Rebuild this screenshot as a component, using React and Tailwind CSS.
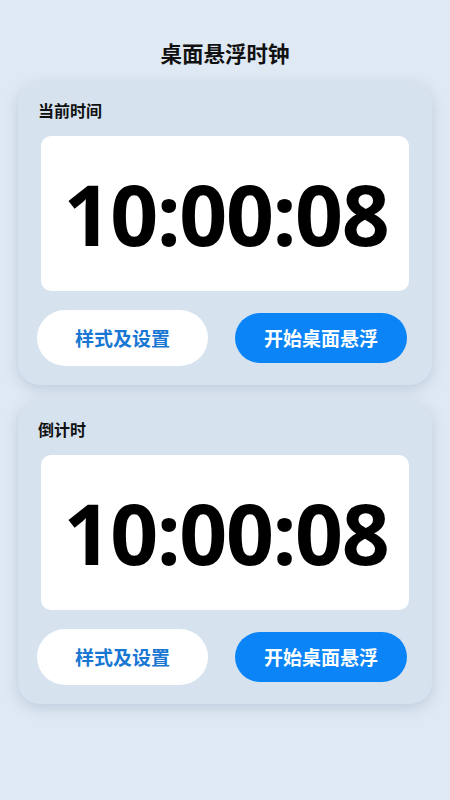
const cjk = { fontFamily: '"Noto Sans CJK SC", "Noto Sans", sans-serif' };

function ClockCard({ label, time }) {
  return (
    <div className="rounded-[22px] bg-[#d6e3ef] px-[19px] pt-[18px] pb-[19px] shadow-[0_4px_14px_rgba(90,120,150,0.25)]">
      <div className="pl-[1px] text-[16px] leading-[20px] font-bold text-[#111]" style={cjk}>
        {label}
      </div>
      <div className="mx-[4px] mt-[16px] flex h-[155px] items-center justify-center rounded-[10px] bg-white">
        <span
          className="pl-[2px] text-[84px] font-bold leading-none tracking-[-1.3px] text-black"
          style={{ fontFamily: '"Noto Sans", "Open Sans", sans-serif' }}
        >
          {time}
        </span>
      </div>
      <div className="mt-[19px] flex h-[56px] items-center justify-between pr-[6px]">
        <button
          className="flex h-[56px] w-[171px] items-center justify-center rounded-full bg-white text-[19px] font-bold text-[#1877d2]"
          style={cjk}
        >
          样式及设置
        </button>
        <button
          className="flex h-[50px] w-[172px] items-center justify-center rounded-full bg-[#0a84f6] text-[19px] font-bold text-white"
          style={cjk}
        >
          开始桌面悬浮
        </button>
      </div>
    </div>
  );
}

export default function App() {
  return (
    <div className="min-h-[800px] w-full bg-[#dfe9f3] px-[18px] pt-[40px]">
      <h1 className="text-center text-[21.5px] leading-[26px] font-bold text-[#111]" style={cjk}>
        桌面悬浮时钟
      </h1>
      <div className="mt-[16px] flex flex-col gap-[16px]">
        <ClockCard label="当前时间" time="10:00:08" />
        <ClockCard label="倒计时" time="10:00:08" />
      </div>
    </div>
  );
}
